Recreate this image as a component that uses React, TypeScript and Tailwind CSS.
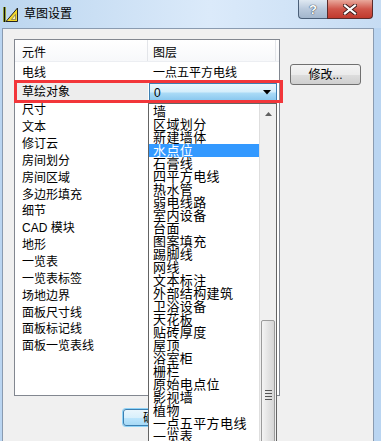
import React from 'react';

const parts = [
  '尺寸', '文本', '修订云', '房间划分', '房间区域', '多边形填充', '细节', 'CAD 模块',
  '地形', '一览表', '一览表标签', '场地边界', '面板尺寸线', '面板标记线', '面板一览表线',
];

const layers = [
  '墙', '区域划分', '新建墙体', '水点位', '石膏线', '四平方电线', '热水管', '弱电线路',
  '室内设备', '台面', '图案填充', '踢脚线', '网线', '文本标注', '外部结构建筑', '卫浴设备',
  '天花板', '贴砖厚度', '屋顶', '浴室柜', '栅栏', '原始电点位', '影视墙', '植物',
  '一点五平方电线', '一览表',
];

function AppIcon() {
  return (
    <svg width="15" height="15" viewBox="0 0 15 15">
      <rect x="0" y="0" width="3" height="15" fill="#c6dc52" />
      <line x1="1.5" y1="0" x2="1.5" y2="15" stroke="#111" strokeWidth="1.6" />
      <polygon points="3,14.5 14.5,1 14.5,14.5" fill="#f2d62c" stroke="#222" strokeWidth="1" />
      <polygon points="8.5,12.5 12.5,7.5 12.5,12.5" fill="#faf3b0" stroke="#555" strokeWidth="0.6" />
    </svg>
  );
}

function TitleBar() {
  return (
    <div className="h-[28px] flex items-start bg-[linear-gradient(to_right,#bcd6ef,#dbeafa_55%,#c6dcf3)]">
      <div className="h-[28px] flex items-center pl-[3px] gap-[6px]">
        <AppIcon />
        <span className="text-[12px] leading-[14px] text-black">草图设置</span>
      </div>
      <div className="ml-auto mr-[8px] flex">
        <div className="w-[29px] h-[19px] rounded-bl-[4px] border border-t-0 border-r-0 border-[#4b5f78] bg-[linear-gradient(to_bottom,#dfe8f2,#b9c9dc_50%,#a3b6cc)] flex items-center justify-center">
          <span className="text-[13px] leading-[13px] font-bold text-white [text-shadow:0_0_1px_#2c3a4c,0_0_1px_#2c3a4c]">?</span>
        </div>
        <div className="w-[46px] h-[19px] rounded-br-[4px] border border-t-0 border-[#5a2b2b] bg-[linear-gradient(to_bottom,#e9a99c,#d0564a_50%,#c03a2e)] flex items-center justify-center">
          <svg width="14" height="11" viewBox="0 0 14 11">
            <path d="M2 1.5 L12 9.5 M12 1.5 L2 9.5" stroke="#3a1a1a" strokeWidth="4" strokeLinecap="square" />
            <path d="M2 1.5 L12 9.5 M12 1.5 L2 9.5" stroke="#fff" strokeWidth="2.2" strokeLinecap="square" />
          </svg>
        </div>
      </div>
    </div>
  );
}

function Combo() {
  return (
    <div className="ml-[1px] mt-[1px] w-[128px] h-[19px] border border-[#3c7fb1] bg-[linear-gradient(to_bottom,#eaf6fd,#d4eefb_45%,#a9daf6_55%,#86c6ee)] flex items-center pl-[4px] pr-[5px]">
      <span className="text-[12px] leading-[14px]">0</span>
      <svg className="ml-auto" width="8" height="5" viewBox="0 0 8 5">
        <polygon points="0,0 8,0 4,4.5" fill="#000" />
      </svg>
    </div>
  );
}

function PartsList() {
  return (
    <div className="w-[266px] h-[357px] border border-[#828790] bg-white flex flex-col">
      <div className="h-[22px] flex bg-[linear-gradient(to_bottom,#ffffff,#f7f8fa)] border-b border-[#eceef2]">
        <div className="w-[133px] border-r border-[#e3e5e9] pl-[7px] flex items-center pt-[4px]">元件</div>
        <div className="w-[128px] border-r border-[#e3e5e9] pl-[5px] flex items-center pt-[4px]">图层</div>
        <div className="flex-1" />
      </div>
      <div className="h-[20px] flex items-center pt-[2px]">
        <div className="w-[133px] pl-[7px]">电线</div>
        <div className="pl-[5px]">一点五平方电线</div>
      </div>
      <div className="h-[20px] flex">
        <div className="w-[133px] pl-[7px] bg-[#ededed] flex items-center">草绘对象</div>
        <Combo />
      </div>
      {parts.map((p) => (
        <div key={p} className="h-[16.85px] flex items-center">
          <div className="w-[133px] pl-[7px]">{p}</div>
        </div>
      ))}
    </div>
  );
}

function Dropdown() {
  return (
    <div className="absolute left-[148px] top-[103px] w-[129px] h-[360px] border border-[#646464] bg-white flex">
      <div className="w-[110px] flex flex-col pt-[1px]">
        {layers.map((l) => (
          <div
            key={l}
            className={
              l === '水点位'
                ? 'h-[13px] pl-[4px] bg-[#3399ff] text-white text-[13px] leading-[13px] tracking-[0.4px] whitespace-nowrap'
                : 'h-[13px] pl-[4px] text-[13px] leading-[13px] tracking-[0.4px] whitespace-nowrap'
            }
          >
            {l}
          </div>
        ))}
      </div>
      <div className="w-[17px] bg-[#f0f0f0] border-l border-[#dedede] flex flex-col items-center">
        <svg className="mt-[8px]" width="7" height="4" viewBox="0 0 7 4">
          <polygon points="0,4 7,4 3.5,0" fill="#606060" />
        </svg>
        <div className="mt-[204px] w-[14px] h-[140px] rounded-[2px] border border-[#9b9b9b] bg-[linear-gradient(to_right,#f4f4f4,#e4e4e4_50%,#d6d6d6)] flex flex-col items-center pt-[69px] gap-[2px]">
          <div className="w-[7px] h-[1px] bg-[#555]" />
          <div className="w-[7px] h-[1px] bg-[#555]" />
          <div className="w-[7px] h-[1px] bg-[#555]" />
          <div className="w-[7px] h-[1px] bg-[#555]" />
        </div>
      </div>
    </div>
  );
}

export default function App() {
  return (
    <div className="relative w-[381px] h-[441px] overflow-hidden bg-[#bad5f1] text-[12px] leading-[14px] text-black font-['Liberation_Sans','Noto_Sans_CJK_SC',sans-serif]">
      <TitleBar />
      <div className="flex h-[413px]">
        <div className="w-[2px]" />
        <div className="w-[372px] bg-[#f0f0f0] border border-b-0 border-[#8a9bb0] pt-[10px] pl-[11px] flex flex-col">
          <div className="flex">
            <PartsList />
            <div className="ml-[10px] mt-[25px]">
              <div className="w-[71px] h-[21px] rounded-[3px] border border-[#707070] bg-[linear-gradient(to_bottom,#f4f4f4,#ebebeb_50%,#dddddd_51%,#cfcfcf)] flex items-center justify-center">
                修改...
              </div>
            </div>
          </div>
          <div className="mt-[13px] ml-[109px] w-[66px] h-[17px] rounded-[3px] border border-[#3c7fb1] shadow-[0_0_0_1px_#8fd3f7] bg-[linear-gradient(to_bottom,#eaf6fd,#d9f0fc_50%,#bee6fd_51%,#a7d9f5)] flex items-center justify-center tracking-[1px]">
            确定
          </div>
        </div>
      </div>
      <div className="absolute left-[14px] top-[80px] w-[269px] h-[23px] border-[3px] border-[#f2363a]" />
      <Dropdown />
    </div>
  );
}
